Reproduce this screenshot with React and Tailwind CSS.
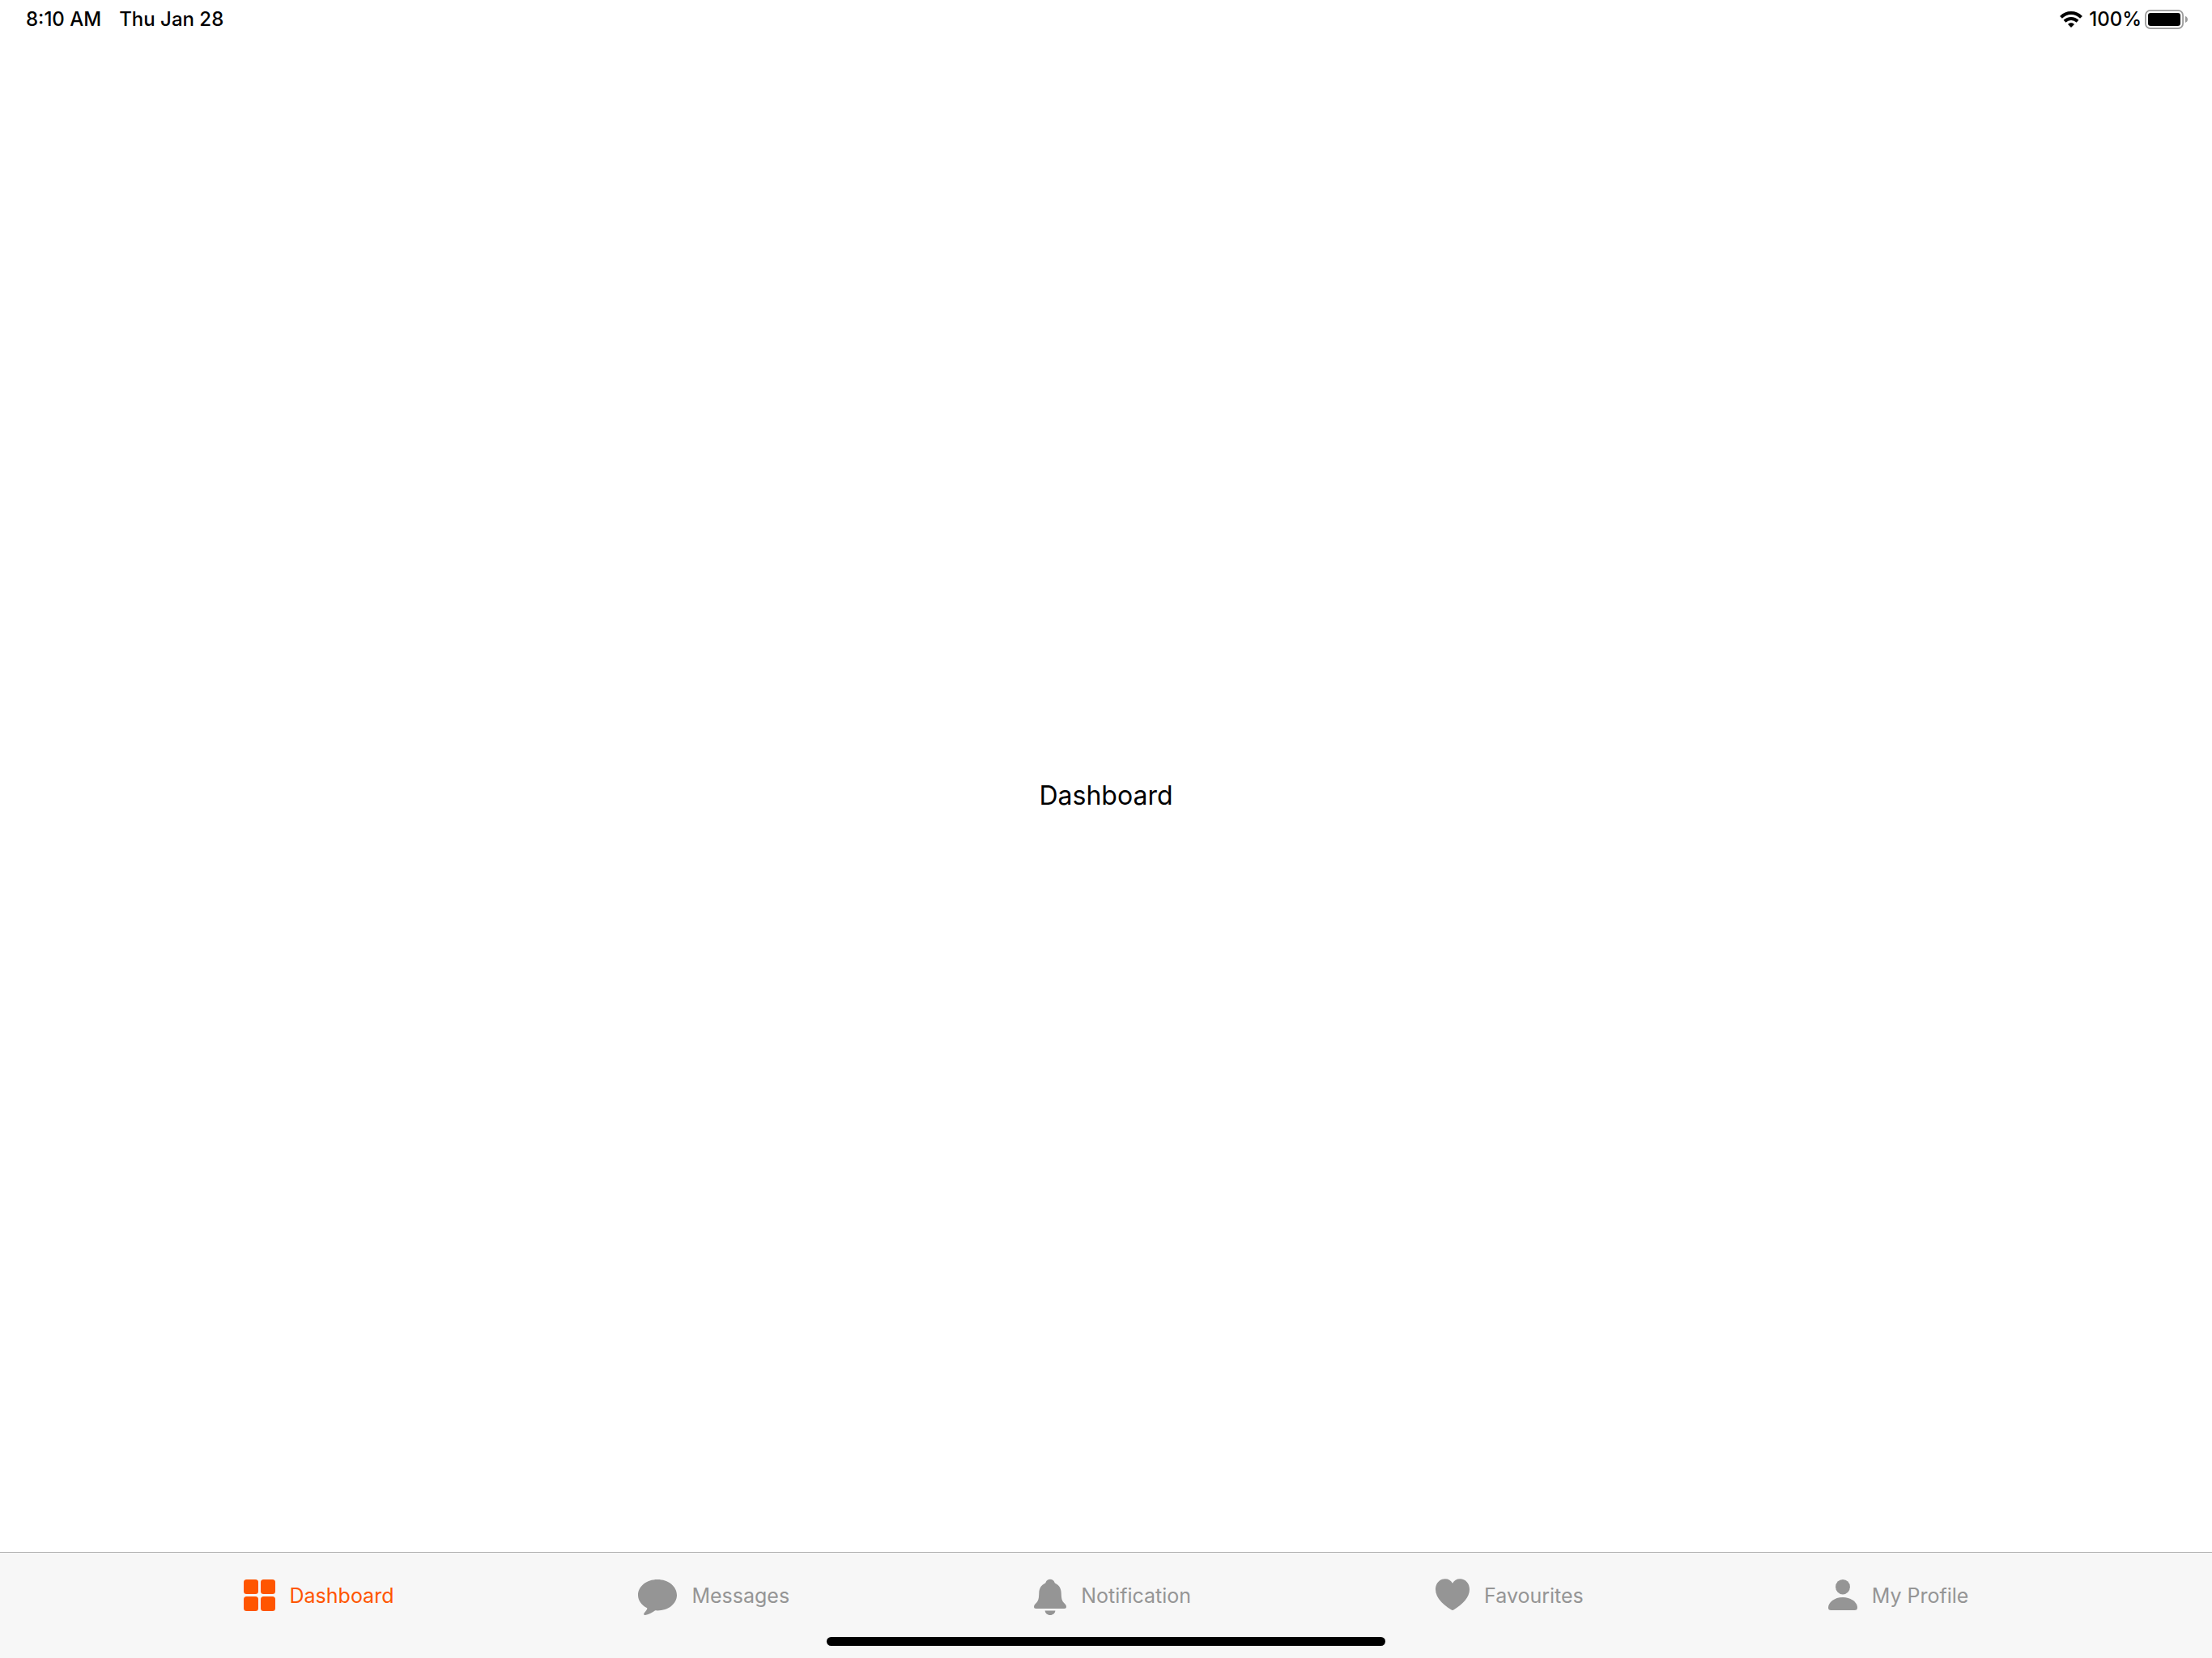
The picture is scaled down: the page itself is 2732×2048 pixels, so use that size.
const icons = {
  grid: (
    <svg width="39" height="48" viewBox="0 0 39 48" fill="currentColor" aria-hidden="true">
      <rect x="0" y="3" width="18" height="18" rx="3.500" />
      <rect x="21" y="3" width="18" height="18" rx="3.500" />
      <rect x="0" y="24" width="18" height="18" rx="3.500" />
      <rect x="21" y="24" width="18" height="18" rx="3.500" />
    </svg>
  ),
  bubble: (
    <svg width="48" height="48" viewBox="0 0 48 48" fill="currentColor" aria-hidden="true">
      <path d="M24 3C37.300 3 48 11.400 48 22.200S37.300 41.400 24 41.400C23 41.400 22 41.400 21.200 41.300C17.500 43.800 12.500 46.600 9 47C7 47.200 6.600 45.600 7.800 44.200C9.200 42.500 10.600 40.800 11.300 39.200C11.500 38.700 11.300 38.300 10.800 38C4.200 34.500 0 28.800 0 22.200C0 11.400 10.700 3 24 3Z" />
    </svg>
  ),
  bell: (
    <svg width="40" height="48" viewBox="0 0 40 48" fill="currentColor" aria-hidden="true">
      <path d="M20 2.800C22.500 2.800 24.500 4 25.300 6.200C25.500 6.900 25.800 7.400 26.400 7.700C31 9.800 33.500 14 33.700 19.500C33.900 25.500 34.200 28.500 36.500 31.300C38.500 33.600 40 34.800 40 36.800C40 38.200 39 39 37.400 39H2.600C1 39 0 38.200 0 36.800C0 34.800 1.500 33.600 3.500 31.300C5.800 28.500 6.100 25.500 6.300 19.500C6.500 14 9 9.800 13.600 7.700C14.200 7.400 14.500 6.900 14.700 6.200C15.500 4 17.500 2.800 20 2.800Z" />
      <path d="M13.600 41.500H26.400C26.200 44.500 23.500 47 20 47S13.800 44.500 13.600 41.500Z" />
    </svg>
  ),
  heart: (
    <svg width="42" height="48" viewBox="0 0 42 48" fill="currentColor" aria-hidden="true">
      <path d="M21 41C20.400 41 19.800 40.600 19.200 40.200C8 33.200 0 25 0 15.200C0 7.600 5.200 2.200 11.800 2.200C16 2.200 19.200 4.200 21 7.800C22.800 4.200 26 2.200 30.200 2.200C36.800 2.200 42 7.600 42 15.200C42 25 34 33.200 22.800 40.200C22.200 40.600 21.600 41 21 41Z" />
    </svg>
  ),
  person: (
    <svg width="36" height="48" viewBox="0 0 36 48" fill="currentColor" aria-hidden="true">
      <ellipse cx="18" cy="12.200" rx="8.900" ry="9.300" />
      <path d="M18 25C28.500 25 36 31.500 36 37.800C36 40 34.900 41 32.600 41H3.400C1.100 41 0 40 0 37.800C0 31.500 7.500 25 18 25Z" />
    </svg>
  ),
};

const tabs = [
  { label: "Dashboard", icon: icons.grid, active: true },
  { label: "Messages", icon: icons.bubble },
  { label: "Notification", icon: icons.bell },
  { label: "Favourites", icon: icons.heart },
  { label: "My Profile", icon: icons.person },
];

function Wifi() {
  return (
    <svg width="28" height="20" viewBox="0 0 28 20" fill="none" stroke="black" strokeWidth="4" role="img" aria-label="Wi-Fi">
      <path d="M1.500 7.400C8.500 0.300 19.500 0.300 26.500 7.400" />
      <path d="M6 12.300C10.500 7.900 17.500 7.900 22 12.300" />
      <path d="M10 16C12.300 13.700 15.700 13.700 18 16L14 20Z" fill="black" stroke="none" />
    </svg>
  );
}

function Battery() {
  return (
    <svg width="53" height="24" viewBox="0 0 53 24" role="img" aria-label="Battery full">
      <rect x="0.900" y="0.900" width="46.200" height="22.200" rx="6" fill="none" stroke="#9b9b9b" strokeWidth="1.800" />
      <rect x="4" y="4" width="40" height="16" rx="3.200" fill="black" />
      <path d="M50 8C51.800 8.600 53 10.200 53 12S51.800 15.400 50 16Z" fill="#9b9b9b" />
    </svg>
  );
}

export default function App() {
  return (
    <div className="flex min-h-screen flex-col bg-white font-['Inter',sans-serif] text-black">
      <header className="flex h-12 items-center justify-between pl-8 pr-[30px] text-2xl font-medium">
        <div className="flex gap-[22px]">
          <time>8:10 AM</time>
          <span>Thu Jan 28</span>
        </div>
        <div className="flex items-center gap-2">
          <Wifi />
          <div className="flex items-center gap-1">
            <span>100%</span>
            <Battery />
          </div>
        </div>
      </header>
      <main className="flex flex-1 items-center justify-center">
        <h1 className="text-[32px]">Dashboard</h1>
      </main>
      <nav aria-label="Main" className="flex flex-col items-center border-t border-[#b2b2b2] bg-[#f7f7f7] pt-1 pb-[15px]">
        <div className="flex h-25 w-full items-center justify-between px-[11%]">
          {tabs.map((tab) => (
            <button
              key={tab.label}
              type="button"
              aria-current={tab.active ? "page" : undefined}
              className={`flex items-center gap-[18px] text-[25px] ${tab.active ? "text-[#ff5500]" : "text-[#959595]"}`}
            >
              {tab.icon}
              <span>{tab.label}</span>
            </button>
          ))}
        </div>
        <div className="h-[11px] w-[690px] rounded-full bg-black" />
      </nav>
    </div>
  );
}
